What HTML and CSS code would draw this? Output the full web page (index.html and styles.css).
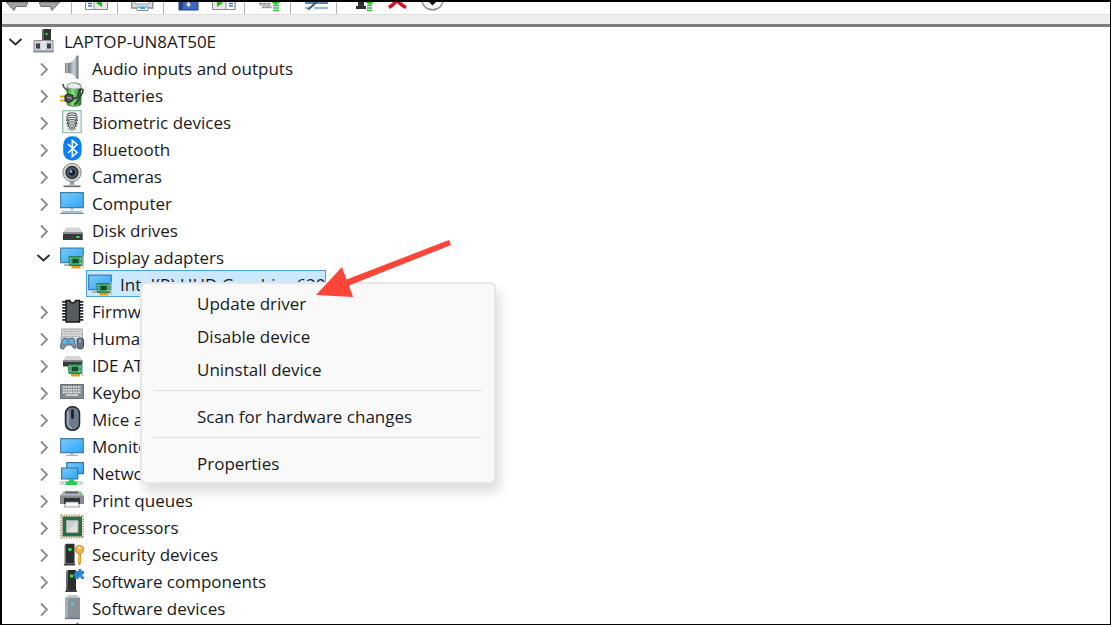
FILE: index.html
```html
<!DOCTYPE html>
<html lang="en">
<head>
    <meta charset="UTF-8">
    <meta name="viewport" content="width=device-width, initial-scale=1.0">
    <title>Device Manager</title>
    <link rel="stylesheet" href="styles.css">
</head>
<body>
    <!-- shared icon parts -->
    <svg class="defs" aria-hidden="true">
        <defs>
            <linearGradient id="sky" x1="0" y1="0" x2="1" y2="1">
                <stop offset="0" stop-color="#7ccbfb"/>
                <stop offset="1" stop-color="#2ea3f7"/>
            </linearGradient>
            <linearGradient id="steel" x1="0" y1="0" x2="1" y2="0">
                <stop offset="0" stop-color="#7d858c"/>
                <stop offset="0.5" stop-color="#c9d0d6"/>
                <stop offset="1" stop-color="#838b92"/>
            </linearGradient>
            <linearGradient id="leaf" x1="0" y1="0" x2="1" y2="0">
                <stop offset="0" stop-color="#2f9a35"/>
                <stop offset="0.4" stop-color="#8be07e"/>
                <stop offset="1" stop-color="#1f7d2b"/>
            </linearGradient>
            <symbol id="right" viewBox="0 0 22 27"><path d="M9 9.500l6 6-6 6" fill="none" stroke="#8b8b8b" stroke-width="1.800"/></symbol>
            <symbol id="down" viewBox="0 0 22 27"><path d="M5.500 12l6 5.500 6-5.500" fill="none" stroke="#2b2b2b" stroke-width="1.800"/></symbol>
            <symbol id="card" viewBox="0 0 16 14">
                <path d="M3 10h9v3.500H3z" fill="#f3a51c"/>
                <path d="M5.500 10v3M8 10v3M10.500 10v3" stroke="#c97c0c" stroke-width=".7"/>
                <path d="M0 1.500h14v9H1z" fill="#3fa468" stroke="#1f6e41" stroke-width=".8"/>
                <path d="M4 4h6v4H4z" fill="#174a2e"/>
                <path d="M1.500 3h1v1h-1zM11.500 3.500h1v1h-1zM1.500 7.500h1v1h-1zM11 8h1.500v1H11z" fill="#b6ecc4"/>
                <path d="M14.500 0v13" stroke="#b9c0c4" stroke-width="1.400"/>
            </symbol>
            <symbol id="speaker" viewBox="0 0 24 27">
                <path d="M5 9h5v10H5z" fill="#75808b"/>
                <path d="M6 9h2v10H6z" fill="#aab3bb"/>
                <path d="M9 9c3-1 6-4 7.500-7.500h2v23.500h-2C15 21.500 12 19.500 9 19z" fill="url(#steel)"/>
                <path d="M17.500 2v22.500" stroke="#7d868e" stroke-width="1.500"/>
            </symbol>
            <symbol id="adapter" viewBox="0 0 24 27">
                <path d="M.7 5.200h22.600v14.500H.7z" fill="url(#sky)" stroke="#3b80a8" stroke-width="1.200"/>
                <path d="M4 22h7" stroke="#8fa6b5" stroke-width="1.500"/>
                <use href="#card" x="8.500" y="12" width="16" height="14"/>
            </symbol>
            <symbol id="tower" viewBox="0 0 12 23">
                <path d="M2.500 0H11v20H2z" fill="#2b2d2f"/>
                <path d="M1 1.500L2.500 0v20H1z" fill="#6d7072"/>
                <path d="M1 20h10.500l.5 2H0z" fill="#3c3f41"/>
                <path d="M5 4.500h3v3H5z" fill="#37e83f"/>
            </symbol>
        </defs>
    </svg>

    <div class="window">
        <div class="toolbar" role="toolbar">
            <button class="tool" aria-label="Back"><svg viewBox="0 0 24 12"><path d="M2 0l8 8.500 2-4h10l2-4.500z" fill="#a3a3a3" stroke="#6f6f6f"/></svg></button>
            <button class="tool" aria-label="Forward"><svg viewBox="0 0 24 12"><path d="M0 0l2 4.500h9l2 4L21 0z" fill="#a3a3a3" stroke="#6f6f6f"/></svg></button>
            <span class="separator"></span>
            <button class="tool" aria-label="Show tree"><svg viewBox="0 0 24 12"><path d="M.5-2h22v9.500H.5z" fill="#fff" stroke="#858b93"/><path d="M9-2v9" stroke="#858b93"/><path d="M3 1.500h4M3 4h4" stroke="#3a79c4" stroke-width="1.400"/><path d="M10-2h12v9H10z" fill="#e9e9e2"/><path d="M17-2v7l-6-4z" fill="#22b51d"/></svg></button>
            <span class="separator"></span>
            <button class="tool" aria-label="Print"><svg viewBox="0 0 24 12"><path d="M.7-2h21v8h-21z" fill="#d9dce0" stroke="#8b9097" stroke-width="1.400"/><path d="M4-2h14v4H4z" fill="#fff" stroke="#9a9fa5"/><path d="M6 5h11v3.500H6z" fill="#eef8fc" stroke="#8b9097"/><path d="M9 6h5" stroke="#16b6ee" stroke-width="2"/></svg></button>
            <span class="separator"></span>
            <button class="tool" aria-label="Help"><svg viewBox="0 0 24 12"><path d="M2-2h19v10H2z" fill="#3c66cc" stroke="#203f8f"/><path d="M2-2h4v10H2z" fill="#23458f"/><path d="M11.500 0v5M9.500 2.500h4" stroke="#fff" stroke-width="1.500"/></svg></button>
            <button class="tool" aria-label="Show action pane"><svg viewBox="0 0 24 12"><path d="M.5-2h22.500v9.500H.5z" fill="#e9e9e2" stroke="#858b93"/><path d="M14-2h9v9.500h-9z" fill="#fff" stroke="#858b93"/><path d="M17 1.500h4M17 4h4" stroke="#3a79c4" stroke-width="1.400"/><path d="M5-2v7l6-4z" fill="#22b51d"/></svg></button>
            <span class="separator"></span>
            <button class="tool" aria-label="Scan"><svg viewBox="0 0 24 12"><path d="M1 1h12v2l1 3h-9l-1-2-3-1z" fill="#c2c5c8"/><path d="M1 1.500h12M4 5.500h9" stroke="#8f9499" stroke-width="1.600" stroke-dasharray="3 1"/><path d="M13 0h9l-4 3z" fill="#22c52c"/><path d="M15 3.500h6M15 6h6M15 8.500h6" stroke="#22c52c" stroke-width="1.500"/></svg></button>
            <span class="separator"></span>
            <button class="tool" aria-label="Properties"><svg viewBox="0 0 24 12"><path d="M1 1h23" stroke="#4b8fbd" stroke-width="2"/><path d="M10 6h14" stroke="#a4b9cd" stroke-width="2.500"/><path d="M1 6h5" stroke="#a4b9cd" stroke-width="2.500"/><path d="M14-1C11 1 9 4 4 7.500" fill="none" stroke="#4d5b66" stroke-width="2"/></svg></button>
            <span class="separator"></span>
            <button class="tool" aria-label="Update driver"><svg viewBox="0 0 24 12"><path d="M8-1h6v5h2v3H6V4h2z" fill="#2e3032"/><path d="M15 0h9l-4 3z" fill="#22c52c"/><path d="M17 3.500h5M17 6h5M17 8.500h5" stroke="#22c52c" stroke-width="1.500"/></svg></button>
            <button class="tool" aria-label="Uninstall device"><svg viewBox="0 0 24 12"><path d="M4 5.500C7 3.500 10 1 12.500-2M21 5.500C18 4 14 1 12.500-2" fill="none" stroke="#d9101f" stroke-width="3.500"/></svg></button>
            <button class="tool" aria-label="Disable device"><svg viewBox="0 0 24 12"><circle cx="12.500" cy="-3" r="10.800" fill="#f7f7f7" stroke="#8f8f8f" stroke-width="1.400"/><path d="M8-1h9l-4.500 4.500z" fill="#111"/></svg></button>
        </div>
        <div class="strip"></div>

        <ul class="tree">
            <li>
                <div class="row">
                    <button class="toggle" aria-label="Collapse"><svg><use href="#down"/></svg></button>
                    <span class="item"><svg class="icon" viewBox="0 0 24 27"><path d="M10 3l2-1h7v13h-9z" fill="#303335"/><path d="M10 3l2-1v13h-2z" fill="#606466"/><path d="M13.500 6h2v2h-2z" fill="#35e53e"/><path d="M2 13.500h19v11H2z" fill="#cdd0d8" stroke="#8c9098"/><path d="M1.500 23.500h20v2h-20z" fill="#8b8f96"/><path d="M4 16.500h4v5H4zM15 16.500h4v5h-4z" fill="#3d4044"/><path d="M9 14h5v9H9z" fill="#e2e4e9"/></svg>LAPTOP-UN8AT50E</span>
                </div>
                <ul>
                    <li class="row">
                        <button class="toggle" aria-label="Expand"><svg><use href="#right"/></svg></button>
                        <span class="item"><svg class="icon"><use href="#speaker"/></svg>Audio inputs and outputs</span>
                    </li>
                    <li class="row">
                        <button class="toggle" aria-label="Expand"><svg><use href="#right"/></svg></button>
                        <span class="item"><svg class="icon" viewBox="0 0 24 27"><path d="M7 5c0-4 14-4 14 0v18c0 3-14 3-14 0z" fill="url(#leaf)" stroke="#256b2b" stroke-width=".7"/><path d="M7 6V4.500C8 3 10 3.500 10.500 2h6c.5 1.500 4 1.500 4.500 3v1.500c-3 2-11 2-14-.5z" fill="#e9eaf4" stroke="#9a9cab" stroke-width=".7"/><path d="M3 3c0 4 3 5 5 7" fill="none" stroke="#555" stroke-width="1.600"/><path d="M0 15.500h6M0 19.500h6" stroke="#d8a81d" stroke-width="1.800"/><path d="M5 14.500l3-1.500 5 1.500v5L9 21.500l-4-1.500z" fill="#4a4d50" stroke="#202224"/><path d="M7 15.500l5 1v1.500l-5-1z" fill="#96999c"/><path d="M13 17.500c6 0 5-3 6-7 1-3 4-3 4-1 0 4-3 5-4 8-1 3-2 5-5 6" fill="none" stroke="#303234" stroke-width="1.500"/></svg>Batteries</span>
                    </li>
                    <li class="row">
                        <button class="toggle" aria-label="Expand"><svg><use href="#right"/></svg></button>
                        <span class="item"><svg class="icon" viewBox="0 0 24 27"><path d="M2.700 2.700h18.500v22H2.700z" fill="#edf3f1" stroke="#9bc0b8" stroke-width="1.300"/><g fill="none" stroke="#55595b" stroke-width="1.100"><path d="M7 7c2-3 8-3 10 0M6.500 10c1-4 10-4 11 0M6.500 13c1-5 10-5 11 0M7 16c1-6 9-6 10 0M8 19c1-7 7-7 8 0M9 21.500c1-7 5-7 6 0M11 22.500c0-5 2-5 2 0M8 10v9M16 10v9"/></g></svg>Biometric devices</span>
                    </li>
                    <li class="row">
                        <button class="toggle" aria-label="Expand"><svg><use href="#right"/></svg></button>
                        <span class="item"><svg class="icon" viewBox="0 0 24 27"><rect x="3.200" y="1.200" width="18.400" height="24.300" rx="8.500" fill="#0a80f5"/><path d="M8 9l9 8.500-4.700 4V5.500L17 9.500 8 18" fill="none" stroke="#fff" stroke-width="1.600"/></svg>Bluetooth</span>
                    </li>
                    <li class="row">
                        <button class="toggle" aria-label="Expand"><svg><use href="#right"/></svg></button>
                        <span class="item"><svg class="icon" viewBox="0 0 24 27"><path d="M10 19h4v4h-4z" fill="#999"/><path d="M3.500 24.300h17" stroke="#6e7072" stroke-width="1.800"/><path d="M9 22.500h6" stroke="#b5b7b9" stroke-width="1.500"/><circle cx="12" cy="10.500" r="9.200" fill="#d0d1d2" stroke="#88898a" stroke-width="1"/><circle cx="12" cy="10.500" r="5.900" fill="#54585c" stroke="#303336" stroke-width="1.500"/><circle cx="12" cy="10.500" r="3" fill="#0f1928"/><circle cx="11" cy="9.500" r="1.400" fill="#7bb4ea"/></svg>Cameras</span>
                    </li>
                    <li class="row">
                        <button class="toggle" aria-label="Expand"><svg><use href="#right"/></svg></button>
                        <span class="item"><svg class="icon" viewBox="0 0 24 27"><path d="M.7 3.700h22.600v15H.7z" fill="url(#sky)" stroke="#3b80a8" stroke-width="1.200"/><path d="M10.500 19h3v2h-3z" fill="#a4b8c4"/><path d="M2.500 21.800h19l2.500 3.200H0z" fill="#a9bfce"/><path d="M0 24.500h24" stroke="#7894a6"/></svg>Computer</span>
                    </li>
                    <li class="row">
                        <button class="toggle" aria-label="Expand"><svg><use href="#right"/></svg></button>
                        <span class="item"><svg class="icon" viewBox="0 0 24 27"><path d="M6 11.500h13.500l3 5H3z" fill="#d4d5d6"/><path d="M3 16.500h19.700v7.500H3z" fill="#37393b"/><path d="M3 16.500h19.700v1.500H3z" fill="#8c8f91"/><path d="M16.500 20h3v2h-3z" fill="#35e53e"/></svg>Disk drives</span>
                    </li>
                    <li>
                        <div class="row">
                            <button class="toggle" aria-label="Collapse"><svg><use href="#down"/></svg></button>
                            <span class="item"><svg class="icon"><use href="#adapter"/></svg>Display adapters</span>
                        </div>
                        <ul>
                            <li class="row leaf">
                                <span class="item selected"><svg class="icon"><use href="#adapter"/></svg>Intel(R) UHD Graphics 620</span>
                                <div class="menu" role="menu">
                                    <button class="menu-item" role="menuitem">Update driver</button>
                                    <button class="menu-item" role="menuitem">Disable device</button>
                                    <button class="menu-item" role="menuitem">Uninstall device</button>
                                    <hr class="menu-line">
                                    <button class="menu-item" role="menuitem">Scan for hardware changes</button>
                                    <hr class="menu-line">
                                    <button class="menu-item" role="menuitem">Properties</button>
                                </div>
                                <svg class="pointer" viewBox="0 0 136 56" aria-hidden="true"><path d="M0 53L26 25l4.500 12.500L133 -2l2 5L33 43.500 37 55z" fill="#ff4438"/></svg>
                            </li>
                        </ul>
                    </li>
                    <li class="row">
                        <button class="toggle" aria-label="Expand"><svg><use href="#right"/></svg></button>
                        <span class="item"><svg class="icon" viewBox="0 0 24 27"><path d="M4 4v21M21.500 4v21" stroke="#25282a" stroke-width="3.500" stroke-dasharray="1.800 1.200"/><path d="M6 3.500h4c0 3 5.500 3 5.500 0h4V25H6z" fill="#5a5d60" stroke="#151719" stroke-width="1.400"/></svg>Firmware</span>
                    </li>
                    <li class="row">
                        <button class="toggle" aria-label="Expand"><svg><use href="#right"/></svg></button>
                        <span class="item"><svg class="icon" viewBox="0 0 24 27"><path d="M2 5h20l1 12H1z" fill="#d5d8da" stroke="#9ba0a4"/><path d="M4 7.500h16M3.500 10h17M3 12.500h18" stroke="#a4aaae" stroke-width="1.200" stroke-dasharray="2 1"/><path d="M3 15c3-2 4 0 5.500 0s3-2 5.500 0l2 9c-3 2-4-3-5-3H7c-2 0-2 5-5 4-3 0-1-7 1-10z" fill="#7c91a3" stroke="#465563" stroke-width=".8"/><circle cx="5" cy="17.500" r="2.300" fill="#4fb6f8"/><circle cx="12" cy="17.500" r="2.300" fill="#4fb6f8"/><rect x="17" y="14" width="6.500" height="11" rx="3" fill="#66788a" stroke="#3d4955"/><path d="M20 15v4" stroke="#c5d0da"/></svg>Human Interface Devices</span>
                    </li>
                    <li class="row">
                        <button class="toggle" aria-label="Expand"><svg><use href="#right"/></svg></button>
                        <span class="item"><svg class="icon" viewBox="0 0 24 27"><path d="M6 5h13.500l3 4.500H3z" fill="#d4d5d6"/><path d="M3 9.500h19.500v6H3z" fill="#37393b"/><path d="M3 9.500h19.500V11H3z" fill="#808385"/><use href="#card" x="8" y="12" width="16" height="14"/></svg>IDE ATA/ATAPI controllers</span>
                    </li>
                    <li class="row">
                        <button class="toggle" aria-label="Expand"><svg><use href="#right"/></svg></button>
                        <span class="item"><svg class="icon" viewBox="0 0 24 27"><path d="M.5 6.500h23v14H.5z" fill="#858c92" stroke="#687076"/><path d="M3 9h18M3 11.700h18M3 14.400h18" stroke="#f0f2f3" stroke-width="1.600" stroke-dasharray="1.700 .8"/><path d="M6 17h12" stroke="#f0f2f3" stroke-width="1.300"/></svg>Keyboards</span>
                    </li>
                    <li class="row">
                        <button class="toggle" aria-label="Expand"><svg><use href="#right"/></svg></button>
                        <span class="item"><svg class="icon" viewBox="0 0 24 27"><rect x="5.500" y="1.800" width="14" height="23.500" rx="6.500" fill="#6d7b8b" stroke="#22272c" stroke-width="1.500"/><path d="M8 6v12c0 3 2 5 4 5" fill="none" stroke="#a8b7c8" stroke-width="1.500"/><rect x="11" y="4" width="3" height="10" rx="1.500" fill="#20262c"/></svg>Mice and other pointing devices</span>
                    </li>
                    <li class="row">
                        <button class="toggle" aria-label="Expand"><svg><use href="#right"/></svg></button>
                        <span class="item"><svg class="icon" viewBox="0 0 24 27"><path d="M.7 6.700h22.600v14H.7z" fill="url(#sky)" stroke="#3b80a8" stroke-width="1.200"/><path d="M10.500 21h3v2h-3z" fill="#a4b8c4"/><path d="M6 23.300h12" stroke="#9db3c0" stroke-width="1.300"/></svg>Monitors</span>
                    </li>
                    <li class="row">
                        <button class="toggle" aria-label="Expand"><svg><use href="#right"/></svg></button>
                        <span class="item"><svg class="icon" viewBox="0 0 24 27"><path d="M6.700 3.700h16.800v11H6.700z" fill="url(#sky)" stroke="#33779f" stroke-width="1.200"/><path d="M1.700 9h16v11h-16z" fill="url(#sky)" stroke="#33779f" stroke-width="1.200"/><path d="M0 22h23v4H0z" fill="#d3d6d8"/><path d="M9 20h5v2.500h3V26H6v-3.500h3z" fill="#2ec84c"/></svg>Network adapters</span>
                    </li>
                    <li class="row">
                        <button class="toggle" aria-label="Expand"><svg><use href="#right"/></svg></button>
                        <span class="item"><svg class="icon" viewBox="0 0 24 27"><path d="M4 5h16l4 5v8H0v-8z" fill="#858b91"/><path d="M4 5h16l3 4.500H1z" fill="#b4bac0"/><path d="M5 5.500h13v2H5z" fill="#5c6268"/><path d="M19 7.500h3" stroke="#35e53e" stroke-width="1.500"/><path d="M4 12h16v6H4z" fill="#2f3336"/><path d="M6 16h12l2 5H4z" fill="#f4f5f6" stroke="#777c80" stroke-width=".7"/></svg>Print queues</span>
                    </li>
                    <li class="row">
                        <button class="toggle" aria-label="Expand"><svg><use href="#right"/></svg></button>
                        <span class="item"><svg class="icon" viewBox="0 0 24 27"><rect x="1.200" y="2.500" width="22" height="22" fill="none" stroke="#b99a4a" stroke-width="2" stroke-dasharray="1.300 1.200"/><path d="M2.500 3.500h19.500v20H2.500z" fill="#2d694b"/><path d="M6.500 7.500h11.500v12H6.500z" fill="#e0e2e1" stroke="#9fb2a7"/><path d="M7 19V8h10.500z" fill="#cbcfcd"/></svg>Processors</span>
                    </li>
                    <li class="row">
                        <button class="toggle" aria-label="Expand"><svg><use href="#right"/></svg></button>
                        <span class="item"><svg class="icon" viewBox="0 0 24 27"><use href="#tower" x="3.500" y="3.500" width="12" height="23"/><path d="M18 13h3v10l-1.500 2.500L18 24z" fill="#dc9a26"/><circle cx="19.500" cy="9.500" r="4.300" fill="#efb544" stroke="#bb7d18" stroke-width=".8"/><circle cx="19.500" cy="7.800" r="1.200" fill="#fff"/><path d="M19 14v9" stroke="#ffe09a" stroke-width=".8"/></svg>Security devices</span>
                    </li>
                    <li class="row">
                        <button class="toggle" aria-label="Expand"><svg><use href="#right"/></svg></button>
                        <span class="item"><svg class="icon" viewBox="0 0 24 27"><use href="#tower" x="5" y="3" width="12" height="23"/><path d="M15 4h3.500V2h3v2H24v3h-1.500v2.500H24V12h-3v-1.500h-2.500V12H15V9.500h-1.500V7H15z" fill="#2b87d3"/></svg>Software components</span>
                    </li>
                    <li class="row">
                        <button class="toggle" aria-label="Expand"><svg><use href="#right"/></svg></button>
                        <span class="item"><svg class="icon" viewBox="0 0 24 27"><path d="M5 4l4-2.500h8L20 4v20.500H5z" fill="#8a9299"/><path d="M5 4l4-2.500h8L20 4z" fill="#bcc3c8"/><path d="M5 4h3v20.500H5z" fill="#a7aeb4"/><path d="M5 24.500h15" stroke="#6d757b" stroke-width="1.300"/><path d="M11 8h3v3h-3z" fill="#35d8f2"/></svg>Software devices</span>
                    </li>
                    <li class="row">
                        <button class="toggle" aria-label="Expand"><svg><use href="#right"/></svg></button>
                        <span class="item"><svg class="icon"><use href="#speaker"/></svg>Sound, video and game controllers</span>
                    </li>
                </ul>
            </li>
        </ul>
    </div>
</body>
</html>
```

FILE: styles.css
```css
* {
    box-sizing: border-box;
}

body {
    margin: 0;
    font-family: "Open Sans", "Noto Sans", sans-serif;
    font-size: 17px;
    color: #1a1a1a;
    background-color: #fff;
}

button {
    padding: 0;
    border: none;
    background: none;
    font: inherit;
    color: inherit;
}

svg {
    display: block;
}

.defs {
    position: absolute;
    width: 0;
    height: 0;
}

.window {
    height: 100vh;
    overflow: hidden;
    border: 1px solid #000;
    border-top-width: 2px;
    border-left-width: 2px;
}

/* toolbar */
.toolbar {
    display: flex;
    gap: 11px;
    height: 12px;
    padding-left: 2px;
    overflow: hidden;
}

.tool svg {
    width: 24px;
    height: 12px;
}

.separator {
    width: 1px;
    margin: 0 2px 0 -3px;
    background-color: #b4b4b4;
}

.strip {
    height: 13px;
    background-color: #eee;
    border-top: 1px solid #e0e0e0;
    border-bottom: 3px solid #7c7c7c;
}

/* device tree */
.tree,
.tree ul {
    margin: 0;
    padding: 0;
    list-style: none;
}

.tree {
    padding-left: 2px;
}

.tree ul {
    padding-left: 28px;
}

.row {
    position: relative;
    display: flex;
    height: 27px;
}

.toggle svg {
    width: 22px;
    height: 27px;
}

.item {
    display: flex;
    gap: 8px;
    margin-left: 4px;
    padding: 0 1px 0 2px;
    line-height: 30px;
    white-space: nowrap;
}

.leaf .item {
    margin-left: 26px;
}

.selected {
    background-color: #cce8ff;
    box-shadow: inset 0 0 0 1px #4a9fe0;
}

.icon {
    width: 24px;
    height: 27px;
}

/* context menu */
.menu {
    position: absolute;
    top: 12px;
    left: 80px;
    z-index: 1;
    min-width: 356px;
    padding: 3px 12px 2px;
    border: 2px solid #e6e6e6;
    border-radius: 6px;
    background-color: #f9f9f9;
    box-shadow: 4px 8px 12px rgba(0, 0, 0, 0.14);
}

.menu-item {
    display: block;
    width: 100%;
    height: 33px;
    padding-left: 43px;
    text-align: left;
}

.menu-item:hover {
    background-color: #f0f0f0;
}

.menu-line {
    height: 1px;
    margin: 4px 0 9px;
    border: none;
    background-color: #dedede;
}

/* red arrow over the menu */
.pointer {
    position: absolute;
    top: -28px;
    left: 256px;
    z-index: 2;
    width: 136px;
    height: 56px;
    overflow: visible;
}
```
